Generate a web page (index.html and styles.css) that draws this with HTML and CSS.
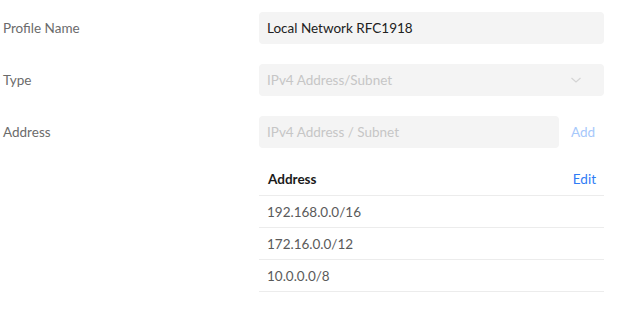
FILE: index.html
```html
<!DOCTYPE html>
<html lang="en">
<head>
  <meta charset="UTF-8">
  <meta name="viewport" content="width=device-width, initial-scale=1.0">
  <title>Profile</title>
  <link rel="stylesheet" href="styles.css">
</head>
<body>
  <div class="form">
    <div class="row">
      <div class="label">Profile Name</div>
      <div class="field">
        <div class="input">Local Network RFC1918</div>
      </div>
    </div>
    <div class="row">
      <div class="label">Type</div>
      <div class="field">
        <div class="input select disabled">
          <span>IPv4 Address/Subnet</span>
          <svg class="chevron" width="12" height="8" viewBox="0 0 12 8"><path d="M1.5 2 L6 6 L10.5 2" fill="none" stroke="#d4d4d4" stroke-width="1.2"/></svg>
        </div>
      </div>
    </div>
    <div class="row">
      <div class="label">Address</div>
      <div class="field add-row">
        <div class="input disabled grow">IPv4 Address / Subnet</div>
        <span class="add">Add</span>
      </div>
    </div>
    <div class="row table-row">
      <div class="label"></div>
      <div class="field">
        <div class="table">
          <div class="thead">
            <span>Address</span>
            <span class="edit">Edit</span>
          </div>
          <div class="trow">192.168.0.0/16</div>
          <div class="trow">172.16.0.0/12</div>
          <div class="trow">10.0.0.0/8</div>
        </div>
      </div>
    </div>
  </div>
</body>
</html>
```

FILE: styles.css
```css
body {
  margin: 0;
  padding: 12px 0 0 3px;
  background: #fff;
  font-family: Lato, "Open Sans", sans-serif;
  font-size: 13.5px;
}

.form {
  display: flex;
  flex-direction: column;
  gap: 20px;
}

.row {
  display: flex;
  align-items: center;
}

.table-row {
  margin-top: -5px;
  align-items: flex-start;
}

.label {
  width: 256px;
  flex-shrink: 0;
  color: #6b6b6b;
}

.field {
  width: 345px;
}

.input {
  height: 32px;
  box-sizing: border-box;
  padding: 0 8px;
  background: #f4f4f4;
  border-radius: 4px;
  color: #212121;
  display: flex;
  align-items: center;
}

.disabled {
  color: #c6c6c6;
}

.select {
  justify-content: space-between;
}

.chevron {
  margin-right: 14px;
}

.add-row {
  display: flex;
  align-items: center;
}

.grow {
  width: 300px;
}

.add {
  margin-left: 12px;
  color: #a6c8fb;
}

.thead {
  height: 32px;
  display: flex;
  align-items: center;
  justify-content: space-between;
  padding: 0 8px 0 9px;
  border-bottom: 1px solid #ececec;
  font-weight: bold;
  color: #1a1a1a;
}

.edit {
  font-weight: normal;
  color: #2f7cf6;
}

.trow {
  height: 31px;
  display: flex;
  align-items: center;
  padding: 0 8px;
  border-bottom: 1px solid #ececec;
  color: #5a5a5a;
}
```
